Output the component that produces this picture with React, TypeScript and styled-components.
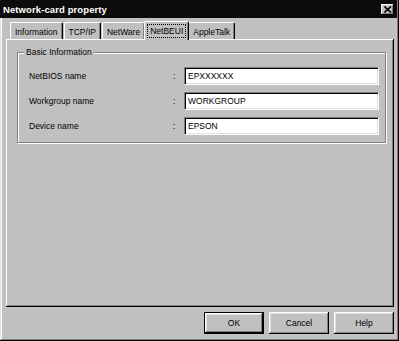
import React from 'react';
import styled, { createGlobalStyle, css } from 'styled-components';

const GlobalStyle = createGlobalStyle`
    html, body {
        margin: 0;
        padding: 0;
        background: #c0c0c0;
    }
    body {
        font-family: "Liberation Sans", Arial, sans-serif;
        font-size: 8.5px;
        color: #000;
    }
`

const raised = css`
    box-shadow: inset -1px -1px #000, inset 1px 1px #fff, inset -2px -2px #808080, inset 2px 2px #dfdfdf;
`

const Window = styled.div`
    width: 399px;
    height: 341px;
    box-sizing: border-box;
    padding: 0 3px 3px 2px;
    display: flex;
    flex-direction: column;
    background: #c0c0c0;
    box-shadow: inset -1px -1px #000, inset 1px 0 #dfdfdf, inset -2px -2px #808080, inset 2px 0 #fff;
`

const TitleBar = styled.div`
    height: 18px;
    margin: 0 -1px 0 -2px;
    padding: 0 3px 0 3px;
    display: flex;
    align-items: center;
    justify-content: space-between;
    background: #0c0c0c;
`

const Title = styled.span`
    color: #fff;
    font-weight: bold;
    font-size: 9.5px;
    letter-spacing: 0.1px;
`

const CloseButton = styled.div`
    width: 13px;
    height: 11px;
    display: flex;
    align-items: center;
    justify-content: center;
    background: #c0c0c0;
    box-shadow: inset -1px -1px #000, inset 1px 1px #fff, inset -2px -2px #808080;
`

const Body = styled.div`
    flex: 1;
    display: flex;
    flex-direction: column;
    padding: 2px 2px 2px 4px;
`

const TabStrip = styled.div`
    height: 19px;
    display: flex;
    align-items: flex-end;
    padding-left: 4px;
    position: relative;
    z-index: 1;
`

const Tab = styled.div<{ $active?: boolean }>`
    height: ${(p) => (p.$active ? 19 : 17)}px;
    box-sizing: border-box;
    padding: 0 ${(p) => (p.$active ? 3 : 2)}px;
    margin: 0 ${(p) => (p.$active ? -1 : 1)}px ${(p) => (p.$active ? -1 : 0)}px
        ${(p) => (p.$active ? -2 : 0)}px;
    display: flex;
    align-items: center;
    background: #c0c0c0;
    border-top: 1px solid #fff;
    border-left: 1px solid #fff;
    border-right: 1px solid #000;
    border-radius: 2px 2px 0 0;
    box-shadow: inset -1px 0 #808080;
    position: relative;
    z-index: ${(p) => (p.$active ? 2 : 0)};
`

const TabLabel = styled.span<{ $focus?: boolean }>`
    padding: 1px 2px;
    margin-top: ${(p) => (p.$focus ? -1 : 1)}px;
    outline: ${(p) => (p.$focus ? '1px dotted #000' : 'none')};
`

const Panel = styled.div`
    flex: 1;
    box-sizing: border-box;
    padding: 13px 8px 0 11px;
    background: #c0c0c0;
    box-shadow: inset -1px -1px #000, inset 1px 1px #fff, inset -2px -2px #808080;
`

const GroupBox = styled.div`
    position: relative;
    display: grid;
    grid-template-columns: 144px 11px 1fr;
    row-gap: 7px;
    align-items: center;
    padding: 14px 6px 7px 11px;
    border: 1px solid #808080;
    box-shadow: inset 1px 1px #fff, 1px 1px #fff;
`

const Legend = styled.span`
    position: absolute;
    top: -6px;
    left: 6px;
    padding: 0 2px;
    background: #c0c0c0;
    line-height: 11px;
`

const FieldLabel = styled.span`
    line-height: 18px;
`

const Colon = styled.span`
    line-height: 18px;
`

const TextBox = styled.div`
    height: 18px;
    box-sizing: border-box;
    padding: 0 3px;
    display: flex;
    align-items: center;
    background: #fff;
    border-top: 1px solid #808080;
    border-left: 1px solid #808080;
    border-bottom: 1px solid #fff;
    border-right: 1px solid #fff;
    box-shadow: inset 1px 1px #000, inset -1px -1px #dfdfdf;
`

const ButtonRow = styled.div`
    display: flex;
    justify-content: flex-end;
    gap: 5px;
    padding: 5px 0 2px;
`

const Button = styled.div<{ $default?: boolean }>`
    width: 60px;
    height: 22px;
    box-sizing: border-box;
    display: flex;
    align-items: center;
    justify-content: center;
    background: #c0c0c0;
    ${raised}
    ${(p) =>
        p.$default &&
        css`
            border: 1px solid #000;
        `}
`

const tabs = ['Information', 'TCP/IP', 'NetWare', 'NetBEUI', 'AppleTalk'];

const fields = [
    { label: 'NetBIOS name', value: 'EPXXXXXX' },
    { label: 'Workgroup name', value: 'WORKGROUP' },
    { label: 'Device name', value: 'EPSON' },
];

function App() {
    return (
        <>
            <GlobalStyle />
            <Window>
                <TitleBar>
                    <Title>Network-card property</Title>
                    <CloseButton>
                        <svg width="8" height="7" viewBox="0 0 8 7">
                            <path d="M0.5 0.5 L7 6.5 M7 0.5 L0.5 6.5" stroke="#000" strokeWidth="1.6" />
                        </svg>
                    </CloseButton>
                </TitleBar>
                <Body>
                    <TabStrip>
                        {tabs.map((t) => (
                            <Tab key={t} $active={t === 'NetBEUI'}>
                                <TabLabel $focus={t === 'NetBEUI'}>{t}</TabLabel>
                            </Tab>
                        ))}
                    </TabStrip>
                    <Panel>
                        <GroupBox>
                            <Legend>Basic Information</Legend>
                            {fields.map((f) => (
                                <React.Fragment key={f.label}>
                                    <FieldLabel>{f.label}</FieldLabel>
                                    <Colon>:</Colon>
                                    <TextBox>{f.value}</TextBox>
                                </React.Fragment>
                            ))}
                        </GroupBox>
                    </Panel>
                    <ButtonRow>
                        <Button $default>OK</Button>
                        <Button>Cancel</Button>
                        <Button>Help</Button>
                    </ButtonRow>
                </Body>
            </Window>
        </>
    );
}

export default App;
